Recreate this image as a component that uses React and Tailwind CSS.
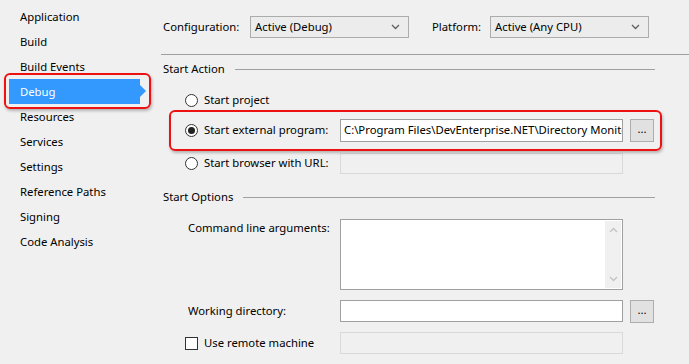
import React from "react";

const navItems = [
  "Application",
  "Build",
  "Build Events",
  "Debug",
  "Resources",
  "Services",
  "Settings",
  "Reference Paths",
  "Signing",
  "Code Analysis",
];

const Chevron = () => (
  <svg width="9" height="6" viewBox="0 0 9 6" className="shrink-0">
    <path d="M1 1 L4.5 4.5 L8 1" fill="none" stroke="#606060" strokeWidth="1.3" />
  </svg>
);

const Select = ({ value }) => (
  <div className="w-[159px] h-[22px] border border-[#acacac] bg-[#ececec] flex items-center justify-between pl-[4px] pr-[8px]">
    <span>{value}</span>
    <Chevron />
  </div>
);

const Radio = ({ checked }) => (
  <div className="w-[13px] h-[13px] rounded-full border border-[#333] bg-white flex items-center justify-center shrink-0">
    {checked && <div className="w-[7px] h-[7px] rounded-full bg-[#222]" />}
  </div>
);

const BrowseButton = () => (
  <div className="w-[24px] h-[23px] border border-[#adadad] bg-[#e1e1e1] flex items-center justify-center ml-[7px] leading-none pb-[3px]">
    ...
  </div>
);

const SectionHeader = ({ title }) => (
  <div className="h-[14px] flex items-center pl-[8px] mr-[34px]">
    <span className="whitespace-nowrap">{title}</span>
    <div className="flex-1 h-px bg-[#a0a0a0] ml-[10px]" />
  </div>
);

export default function App() {
  return (
    <div
      className="w-[689px] h-[364px] bg-[#f0f0f0] flex text-[11.3px] text-black overflow-hidden"
      style={{ fontFamily: '"Noto Sans", "Open Sans", sans-serif' }}
    >
      {/* Sidebar */}
      <aside className="w-[155px] shrink-0 pt-[4px]">
        {navItems.map((item) =>
          item === "Debug" ? (
            <div key={item} className="relative h-[25px]">
              <div className="ml-[9px] w-[131px] h-[25px] bg-[#3399ff] text-white flex items-center pl-[11px] pt-[1px] relative">
                {item}
                <div className="absolute right-[-6px] top-[6px] w-0 h-0 border-y-[6px] border-y-transparent border-l-[6px] border-l-[#3399ff]" />
              </div>
              <div className="absolute left-[4px] top-[-6px] w-[147px] h-[36px] border-2 border-[#ee1111] rounded-[6px] shadow-[1px_2px_3px_rgba(0,0,0,0.25)]" />
            </div>
          ) : (
            <div key={item} className="h-[25px] flex items-center pl-[20px] pt-[1px]">
              {item}
            </div>
          )
        )}
      </aside>

      {/* Main */}
      <main className="flex-1">
        <div className="mt-[16px] h-[22px] flex items-center pl-[8px]">
          <span className="w-[87px]">Configuration:</span>
          <Select value="Active (Debug)" />
          <span className="w-[58px] ml-[23px]">Platform:</span>
          <Select value="Active (Any CPU)" />
        </div>

        <div className="mt-[16px] ml-[6px] h-px bg-[#a0a0a0]" />

        <div className="mt-[7px]">
          <SectionHeader title="Start Action" />
        </div>

        <div className="mt-[14px] h-[20px] flex items-center pl-[30px]">
          <Radio />
          <span className="ml-[6px]">Start project</span>
        </div>

        <div className="relative mt-[9px] h-[23px] flex items-center pl-[30px]">
          <Radio checked />
          <span className="ml-[6px] w-[136px]">Start external program:</span>
          <div className="w-[283px] h-[23px] border border-[#a0a0a0] bg-white flex items-center pl-[3px] overflow-hidden whitespace-nowrap">
            C:\Program Files\DevEnterprise.NET\Directory Monitor
          </div>
          <BrowseButton />
          <div className="absolute left-[14px] top-[-9px] w-[493px] h-[41px] border-2 border-[#ee1111] rounded-[6px] shadow-[1px_2px_3px_rgba(0,0,0,0.25)]" />
        </div>

        <div className="mt-[11px] h-[21px] flex items-center pl-[30px]">
          <Radio />
          <span className="ml-[6px] w-[136px]">Start browser with URL:</span>
          <div className="w-[283px] h-[21px] border border-[#d9d9d9] bg-[#f0f0f0]" />
        </div>

        <div className="mt-[16px]">
          <SectionHeader title="Start Options" />
        </div>

        <div className="mt-[15px] flex pl-[33px]">
          <span className="w-[152px] pt-[1px]">Command line arguments:</span>
          <div className="w-[283px] h-[71px] border border-[#a0a0a0] bg-white flex justify-end p-px">
            <div className="w-[16px] h-full bg-[#f0f0f0] flex flex-col items-center justify-between py-[6px]">
              <svg width="9" height="6" viewBox="0 0 9 6">
                <path d="M1 5 L4.5 1.5 L8 5" fill="none" stroke="#c2c2c2" strokeWidth="1.3" />
              </svg>
              <svg width="9" height="6" viewBox="0 0 9 6">
                <path d="M1 1 L4.5 4.5 L8 1" fill="none" stroke="#c2c2c2" strokeWidth="1.3" />
              </svg>
            </div>
          </div>
        </div>

        <div className="mt-[10px] h-[22px] flex items-center pl-[33px]">
          <span className="w-[152px]">Working directory:</span>
          <div className="w-[283px] h-[22px] border border-[#a0a0a0] bg-white" />
          <BrowseButton />
        </div>

        <div className="mt-[10px] h-[22px] flex items-center pl-[30px]">
          <div className="w-[13px] h-[13px] border border-[#333] bg-white shrink-0" />
          <span className="ml-[6px] w-[136px]">Use remote machine</span>
          <div className="w-[283px] h-[22px] border border-[#d9d9d9] bg-[#f0f0f0]" />
        </div>
      </main>
    </div>
  );
}
